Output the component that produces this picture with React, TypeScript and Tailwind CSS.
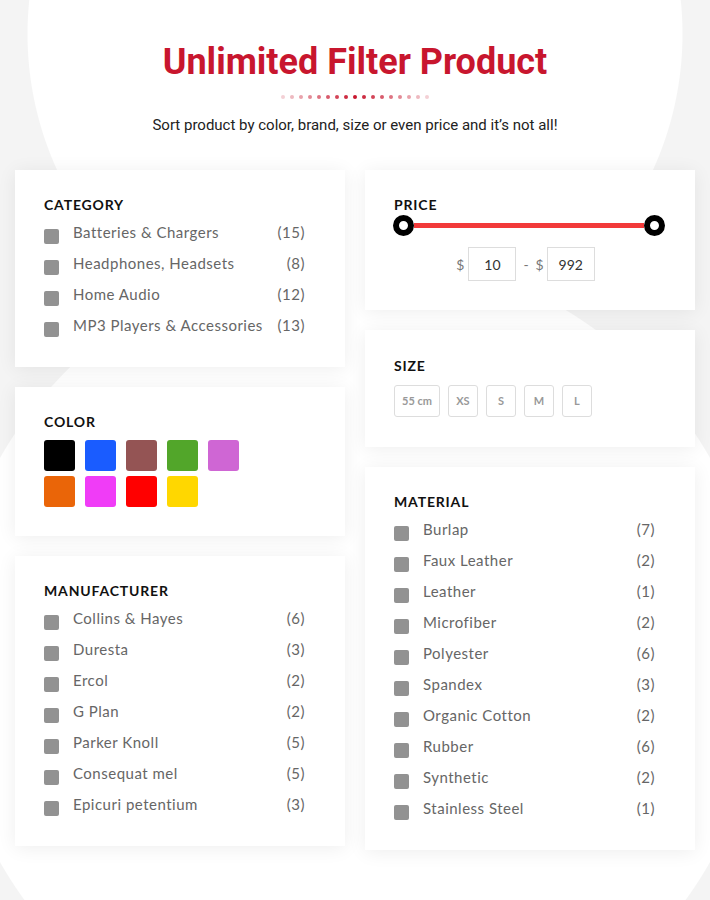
import type { ReactNode } from 'react';

const category = [
  { label: 'Batteries & Chargers', count: 15 },
  { label: 'Headphones, Headsets', count: 8 },
  { label: 'Home Audio', count: 12 },
  { label: 'MP3 Players & Accessories', count: 13 },
];

const manufacturers = [
  { label: 'Collins & Hayes', count: 6 },
  { label: 'Duresta', count: 3 },
  { label: 'Ercol', count: 2 },
  { label: 'G Plan', count: 2 },
  { label: 'Parker Knoll', count: 5 },
  { label: 'Consequat mel', count: 5 },
  { label: 'Epicuri petentium', count: 3 },
];

const materials = [
  { label: 'Burlap', count: 7 },
  { label: 'Faux Leather', count: 2 },
  { label: 'Leather', count: 1 },
  { label: 'Microfiber', count: 2 },
  { label: 'Polyester', count: 6 },
  { label: 'Spandex', count: 3 },
  { label: 'Organic Cotton', count: 2 },
  { label: 'Rubber', count: 6 },
  { label: 'Synthetic', count: 2 },
  { label: 'Stainless Steel', count: 1 },
];

const swatches = [
  'bg-[#000000]',
  'bg-[#1a5cff]',
  'bg-[#945454]',
  'bg-[#52a62a]',
  'bg-[#cf66d4]',
  'bg-[#ea6508]',
  'bg-[#f03cf7]',
  'bg-[#ff0000]',
  'bg-[#ffd700]',
];

const sizes = ['55 cm', 'XS', 'S', 'M', 'L'];

function Card({ title, children, className = '' }: { title: string; children: ReactNode; className?: string }) {
  return (
    <div className={`bg-white shadow-[0_2px_18px_rgba(0,0,0,0.07)] pl-[29px] pt-[26px] ${className}`}>
      <h3 className="h-[18px] text-[14px] leading-[18px] font-bold tracking-[0.06em] text-[#111]">{title}</h3>
      {children}
    </div>
  );
}

function CheckList({ items }: { items: { label: string; count: number }[] }) {
  return (
    <ul className="mt-[3px]">
      {items.map((item) => (
        <li key={item.label} className="flex h-[31px] items-center text-[15px] tracking-[0.5px] text-[#666]">
          <span className="mt-[8px] h-[15px] w-[15px] shrink-0 rounded-[2px] bg-[#929292]" />
          <span className="ml-[14px] flex-1">{item.label}</span>
          <span>({item.count})</span>
        </li>
      ))}
    </ul>
  );
}

function Handle() {
  return <span className="h-[21px] w-[21px] shrink-0 rounded-full border-[6px] border-black bg-white" />;
}

export default function App() {
  return (
    <div className="w-[710px] min-h-[900px] bg-[#f4f4f4] bg-[radial-gradient(circle_at_355px_34px,#ffffff_327px,transparent_328px),radial-gradient(circle_at_355px_660px,#ffffff_408px,transparent_409px)] font-['Lato',sans-serif]">
      <header className="flex flex-col items-center pt-[40px]">
        <h1 className="font-['Roboto',sans-serif] text-[36px] leading-[44px] font-bold text-[#c8162e]">
          Unlimited Filter Product
        </h1>
        <div className="mt-[11px] flex gap-[5px]">
          {Array.from({ length: 17 }).map((_, i) => (
            <span
              key={i}
              className="h-[4px] w-[4px] rounded-full bg-[#c8162e]"
              style={{ opacity: 1 - Math.abs(i - 8) * 0.1 }}
            />
          ))}
        </div>
        <p className="mt-[16px] font-['Roboto',sans-serif] text-[15px] leading-[20px] text-[#222]">
          Sort product by color, brand, size or even price and it’s not all!
        </p>
      </header>

      <main className="mt-[35px] flex gap-[20px] px-[15px]">
        <div className="flex w-[330px] flex-col gap-[20px]">
          <Card title="CATEGORY" className="pr-[40px] pb-[26px]">
            <CheckList items={category} />
          </Card>
          <Card title="COLOR" className="pb-[29px]">
            <div className="mt-[9px] grid w-[195px] grid-cols-5 gap-x-[10px] gap-y-[5px]">
              {swatches.map((c) => (
                <span key={c} className={`h-[31px] w-[31px] rounded-[3px] ${c}`} />
              ))}
            </div>
          </Card>
          <Card title="MANUFACTURER" className="pr-[40px] pb-[26px]">
            <CheckList items={manufacturers} />
          </Card>
        </div>

        <div className="flex w-[330px] flex-col gap-[20px]">
          <Card title="PRICE" className="pr-[30px] pb-[29px]">
            <div className="mt-[1px] -ml-[1.5px] flex items-center">
              <Handle />
              <span className="h-[5px] flex-1 bg-[#f23a3a]" />
              <Handle />
            </div>
            <div className="mt-[11px] flex items-center justify-center pr-[8px] text-[14px] text-[#777]">
              <span className="mr-[4px]">$</span>
              <span className="flex h-[34px] w-[48px] items-center justify-center border border-[#ddd] text-[#333]">10</span>
              <span className="mx-[7px]">-</span>
              <span className="mr-[3px]">$</span>
              <span className="flex h-[34px] w-[48px] items-center justify-center border border-[#ddd] text-[#333]">992</span>
            </div>
          </Card>
          <Card title="SIZE" className="pt-[27px] pb-[30px]">
            <div className="mt-[10px] flex gap-[8px]">
              {sizes.map((s) => (
                <span
                  key={s}
                  className="flex h-[32px] min-w-[30px] items-center justify-center rounded-[3px] border border-[#ddd] px-[7px] text-[11px] font-bold text-[#999]"
                >
                  {s}
                </span>
              ))}
            </div>
          </Card>
          <Card title="MATERIAL" className="pr-[40px] pb-[26px]">
            <CheckList items={materials} />
          </Card>
        </div>
      </main>
    </div>
  );
}
